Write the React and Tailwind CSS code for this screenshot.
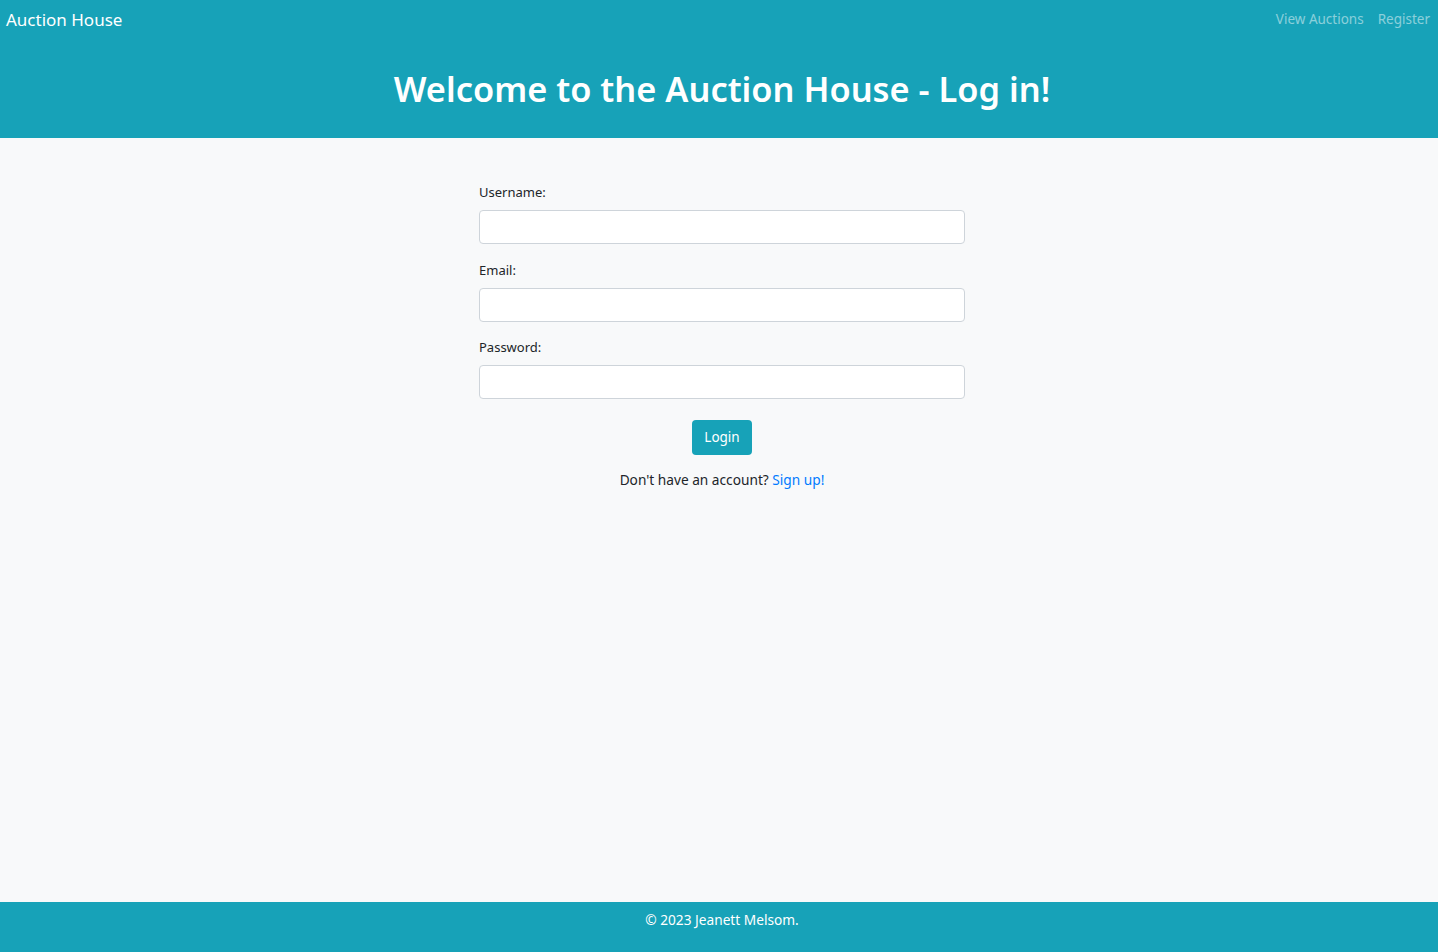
function Field({ label, type }) {
  return (
    <div className="flex flex-col">
      <label className="text-[13px] text-[#212529] leading-[20px] mb-[8px]">{label}</label>
      <input
        type={type}
        className="h-[34px] w-full rounded-[4px] border border-[#ced4da] bg-white px-3 text-sm outline-none"
      />
    </div>
  );
}

export default function App() {
  return (
    <div
      className="min-h-[952px] flex flex-col bg-[#f8f9fa]"
      style={{ fontFamily: '"Noto Sans", "Open Sans", sans-serif' }}
    >
      <header className="bg-[#17a2b8] h-[138px] flex flex-col">
        <nav className="flex items-center justify-between h-[38px] pl-[6px] pr-[8px]">
          <a href="#" className="text-[17px] text-white leading-none">Auction House</a>
          <div className="flex gap-[14px] text-[13.5px] text-white/50">
            <a href="#">View Auctions</a>
            <a href="#">Register</a>
          </div>
        </nav>
        <div className="flex-1 flex items-center justify-center pl-[6px] pt-[2px]">
          <h1 className="text-[34.4px] font-semibold text-white leading-none">
            Welcome to the Auction House - Log in!
          </h1>
        </div>
      </header>

      <main className="flex-1 flex justify-center pl-[6px]">
        <form className="w-[486px] mt-[44px] flex flex-col gap-[15.5px]">
          <Field label="Username:" type="text" />
          <Field label="Email:" type="email" />
          <Field label="Password:" type="password" />
          <div className="flex flex-col items-center mt-[5px]">
            <button
              type="button"
              className="bg-[#17a2b8] text-white text-[13.5px] h-[35px] px-[12px] rounded-[4px]"
            >
              Login
            </button>
            <p className="mt-[15px] text-[13.7px] text-[#212529]">
              Don't have an account? <a href="#" className="text-[#007bff]">Sign up!</a>
            </p>
          </div>
        </form>
      </main>

      <footer className="bg-[#17a2b8] h-[50px] flex justify-center pt-[8px] pl-[6px]">
        <p className="text-[13.7px] text-white">© 2023 Jeanett Melsom.</p>
      </footer>
    </div>
  );
}
